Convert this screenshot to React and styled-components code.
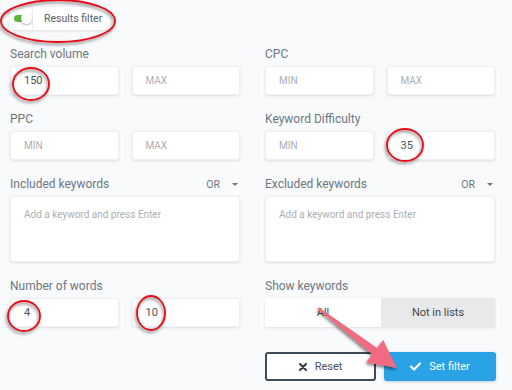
import React from "react";
import styled, { createGlobalStyle } from "styled-components";

const GlobalStyle = createGlobalStyle`
  html, body {
    margin: 0;
    padding: 0;
    background: #f9fafc;
  }
  * {
    box-sizing: border-box;
  }
`;

const Page = styled.div`
  position: relative;
  width: 512px;
  height: 390px;
  padding: 7px 16px 0 10px;
  background: #f9fafc;
  font-family: Roboto, "Noto Sans", sans-serif;
  overflow: hidden;
`;

const ToggleBox = styled.div`
  display: flex;
  align-items: center;
  width: 100px;
  height: 23px;
  background: #ffffff;
  border-radius: 3px;
  box-shadow: 0 1px 3px rgba(40, 50, 60, 0.14);
`;

const SwitchCell = styled.div`
  position: relative;
  width: 23px;
  height: 100%;
  border-right: 1px solid #eceef1;
`;

const Track = styled.span`
  position: absolute;
  left: 4px;
  top: 8px;
  width: 14px;
  height: 7px;
  border-radius: 4px;
  background: #5db534;
`;

const Knob = styled.span`
  position: absolute;
  left: 11px;
  top: 6px;
  width: 11px;
  height: 11px;
  border-radius: 50%;
  background: #ffffff;
  box-shadow: 0 1px 2px rgba(0, 0, 0, 0.3);
`;

const ToggleText = styled.span`
  padding-left: 11px;
  font-size: 10.5px;
  color: #56606a;
`;

const Grid = styled.div`
  display: grid;
  grid-template-columns: 230px 230px;
  column-gap: 25px;
  margin-top: 16px;
`;

const Field = styled.div`
  margin-bottom: ${(p) => p.$mb ?? 16}px;
`;

const LabelRow = styled.div`
  display: flex;
  align-items: center;
  justify-content: space-between;
  height: 16px;
  margin-bottom: 4px;
`;

const Label = styled.span`
  font-size: 12px;
  line-height: 16px;
  color: #6e7680;
`;

const OrSelect = styled.span`
  display: flex;
  align-items: center;
  gap: 12px;
  padding-right: 2px;
  font-size: 10.5px;
  color: #6e7680;
`;

const Caret = styled.span`
  width: 0;
  height: 0;
  border-left: 3px solid transparent;
  border-right: 3px solid transparent;
  border-top: 3px solid #6e7680;
`;

const Pair = styled.div`
  display: grid;
  grid-template-columns: 1fr 1fr;
  column-gap: 13px;
`;

const Input = styled.div`
  display: flex;
  align-items: center;
  height: 29px;
  padding-left: 13px;
  background: #ffffff;
  border: 1px solid #eef0f3;
  border-radius: 3px;
  box-shadow: 0 1px 3px rgba(40, 50, 60, 0.13);
  font-size: ${(p) => (p.$value ? "11px" : "10px")};
  color: ${(p) => (p.$value ? "#4a535c" : "#a9afb6")};
`;

const TextArea = styled.div`
  height: 66px;
  padding: 12px 13px;
  background: #ffffff;
  border: 1px solid #eef0f3;
  border-radius: 3px;
  box-shadow: 0 1px 3px rgba(40, 50, 60, 0.13);
  font-size: 10px;
  color: #a9afb6;
`;

const Segmented = styled.div`
  display: grid;
  grid-template-columns: 116px 1fr;
  height: 29px;
  border-radius: 3px;
  overflow: hidden;
  box-shadow: 0 1px 3px rgba(40, 50, 60, 0.13);
`;

const Segment = styled.div`
  display: flex;
  align-items: center;
  justify-content: center;
  background: ${(p) => (p.$active ? "#ffffff" : "#e8e9eb")};
  font-size: 11px;
  color: #3f464d;
`;

const Actions = styled.div`
  display: grid;
  grid-template-columns: 111px 112px;
  column-gap: 8px;
  margin-top: 25px;
`;

const Button = styled.div`
  display: flex;
  align-items: center;
  justify-content: center;
  gap: 8px;
  height: 29px;
  border-radius: 3px;
  font-size: 11px;
  ${(p) =>
    p.$primary
      ? `
    background: #2aa3e6;
    color: #ffffff;
    box-shadow: 0 1px 3px rgba(20, 80, 120, 0.25);
  `
      : `
    background: #ffffff;
    color: #4a535c;
    border: 2px solid #3e4c57;
  `}
`;

const Overlay = styled.svg`
  position: absolute;
  left: 0;
  top: 0;
  pointer-events: none;
`;

const Ring = ({ cx, cy, rx, ry }) => (
  <ellipse
    cx={cx}
    cy={cy}
    rx={rx}
    ry={ry}
    fill="none"
    stroke="#e3101b"
    strokeWidth="1.8"
    filter="url(#ringShadow)"
  />
);

const Annotations = () => (
  <Overlay width="512" height="390" viewBox="0 0 512 390">
    <defs>
      <filter id="ringShadow" x="-20%" y="-20%" width="140%" height="150%">
        <feDropShadow dx="-1" dy="2" stdDeviation="1.5" floodColor="#000" floodOpacity="0.5" />
      </filter>
    </defs>
    <Ring cx={58} cy={21} rx={57} ry={21} />
    <Ring cx={31} cy={84} rx={18} ry={16} />
    <Ring cx={405} cy={145} rx={18} ry={16} />
    <Ring cx={24} cy={316} rx={16} ry={15} />
    <Ring cx={151} cy={313} rx={14} ry={17} />
    <polygon
      points="317.4,308.8 318.6,307.2 377.1,347.9 383.2,340 397,368 366.2,362.2 372.3,354.3"
      fill="#f06a80"
      filter="url(#ringShadow)"
    />
  </Overlay>
);

const XIcon = () => (
  <svg width="8" height="8" viewBox="0 0 8 8">
    <path d="M1 1 L7 7 M7 1 L1 7" stroke="#2f3a42" strokeWidth="2" strokeLinecap="round" />
  </svg>
);

const CheckIcon = () => (
  <svg width="11" height="9" viewBox="0 0 11 9">
    <path d="M1 4.6 L4 7.5 L10 1.5" fill="none" stroke="#ffffff" strokeWidth="2.2" strokeLinecap="round" strokeLinejoin="round" />
  </svg>
);

const KeywordLabel = ({ children }) => (
  <LabelRow>
    <Label>{children}</Label>
    <OrSelect>
      OR <Caret />
    </OrSelect>
  </LabelRow>
);

export default function App() {
  return (
    <>
      <GlobalStyle />
      <Page>
        <ToggleBox>
          <SwitchCell>
            <Track />
            <Knob />
          </SwitchCell>
          <ToggleText>Results filter</ToggleText>
        </ToggleBox>

        <Grid>
          <Field>
            <LabelRow><Label>Search volume</Label></LabelRow>
            <Pair>
              <Input $value>150</Input>
              <Input>MAX</Input>
            </Pair>
          </Field>
          <Field>
            <LabelRow><Label>CPC</Label></LabelRow>
            <Pair>
              <Input>MIN</Input>
              <Input>MAX</Input>
            </Pair>
          </Field>

          <Field>
            <LabelRow><Label>PPC</Label></LabelRow>
            <Pair>
              <Input>MIN</Input>
              <Input>MAX</Input>
            </Pair>
          </Field>
          <Field>
            <LabelRow><Label>Keyword Difficulty</Label></LabelRow>
            <Pair>
              <Input>MIN</Input>
              <Input $value>35</Input>
            </Pair>
          </Field>

          <Field>
            <KeywordLabel>Included keywords</KeywordLabel>
            <TextArea>Add a keyword and press Enter</TextArea>
          </Field>
          <Field>
            <KeywordLabel>Excluded keywords</KeywordLabel>
            <TextArea>Add a keyword and press Enter</TextArea>
          </Field>

          <Field $mb={0}>
            <LabelRow><Label>Number of words</Label></LabelRow>
            <Pair>
              <Input $value>4</Input>
              <Input $value>10</Input>
            </Pair>
          </Field>
          <Field $mb={0}>
            <LabelRow><Label>Show keywords</Label></LabelRow>
            <Segmented>
              <Segment $active>All</Segment>
              <Segment>Not in lists</Segment>
            </Segmented>
            <Actions>
              <Button>
                <XIcon /> Reset
              </Button>
              <Button $primary>
                <CheckIcon /> Set filter
              </Button>
            </Actions>
          </Field>
        </Grid>

        <Annotations />
      </Page>
    </>
  );
}
